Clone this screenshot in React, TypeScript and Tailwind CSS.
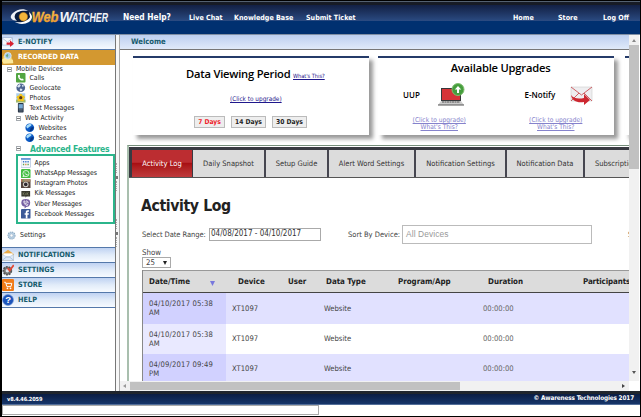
import React from "react";

const tahoma = "font-['DejaVu_Sans_Condensed','DejaVu_Sans',sans-serif]";
const trebuchet = "font-['Open_Sans','Noto_Sans',sans-serif]";

function Logo() {
  return (
    <svg className="block h-[22px] w-[104px] overflow-visible" viewBox="0 0 104 22" role="img" aria-label="WebWatcher">
      <defs>
        <linearGradient id="gold" x1="0" y1="0" x2="0" y2="1">
          <stop offset="0" stopColor="#ffd25a" />
          <stop offset="1" stopColor="#ee9120" />
        </linearGradient>
      </defs>
      <path d="M1 12C4 6 10 4 15 5C19 6 22 9 24 12C20 17 15 19 11 18C6 17 3 15 1 12Z" fill="#071b3d" />
      <path d="M3 15C0 13 0 11 3 8C7 4 14 3 18 6C11 5 6 7 5 10C4 12 5 14 7 16Z" fill="#eef2f8" />
      <path d="M19 7C23 10 23 14 19 17C14 20 8 19 5 17C12 18 18 16 20 12Z" fill="#fff" />
      <circle cx="13.4" cy="11.7" r="4.2" fill="#f3b63a" stroke="#c57c14" strokeWidth=".5" />
      <text x="21.5" y="16.5" fontFamily="Liberation Sans" fontSize="15.5" fontWeight="700" fontStyle="italic" fill="url(#gold)" stroke="#f3a935" strokeWidth=".3" textLength="27" lengthAdjust="spacingAndGlyphs">Web</text>
      <text x="49.5" y="16.5" fontFamily="Liberation Sans" fontSize="15" fontWeight="700" fontStyle="italic" fill="#f1f4f8" textLength="13.5" lengthAdjust="spacingAndGlyphs">W</text>
      <text x="62" y="16.5" fontFamily="Liberation Sans" fontSize="13" fontWeight="700" fontStyle="italic" fill="#f1f4f8" textLength="36" lengthAdjust="spacingAndGlyphs">ATCHER</text>
    </svg>
  );
}

function Icon({ name, size = "size-[10px]" }: { name: string; size?: string }) {
  const art: Record<string, React.ReactNode> = {
    call: <><rect width="10" height="10" rx="1" fill="#52a541" /><path d="M2.2 2C1.6 5.5 4.5 8.5 8 7.8L7.8 6.2L6.2 5.8L5.6 6.4L3.7 4.4L4.3 3.8L3.8 1.9Z" fill="#fff" /></>,
    geo: <><circle cx="5" cy="5" r="4.6" fill="#4d6491" /><path d="M1 3.5L4 1L5 3L3 5ZM6 1.5L8.5 3L7 4.6ZM5 5.5L7 7L5 9L3.8 7Z" fill="#dce6f2" /></>,
    photo: <><rect x=".3" y=".3" width="9.4" height="9.4" fill="#a9cdec" /><path d="M0 7H10V10H0Z" fill="#a2b86b" /><g fill="#f5c51d"><circle cx="5" cy="2.5" r="1.8" /><circle cx="7.4" cy="4.4" r="1.8" /><circle cx="6.6" cy="7" r="1.8" /><circle cx="3.4" cy="7" r="1.8" /><circle cx="2.6" cy="4.4" r="1.8" /></g><circle cx="5" cy="4.9" r="1.7" fill="#5b3a16" /></>,
    phone: <><rect x="2" y="0" width="6" height="10" rx=".8" fill="#263344" /><rect x="2.8" y="1.2" width="4.4" height="4.6" fill="#75a9d6" /><path d="M3 7H7M3 8.4H7" stroke="#7f93a8" strokeWidth=".6" /></>,
    web: <><circle cx="5" cy="5" r="4.6" fill="#0b59c4" /><path d="M1.5 3.2C3 1 6 .6 7 1.6C7 3.6 4.2 3.5 3 5.7C2 5.4 1 4.6 1.5 3.2Z" fill="#a5dcfa" /><path d="M6 5L9 4C9 7 7.2 8.8 5 9Z" fill="#063483" /></>,
    apps: <><rect width="10" height="10" fill="#f5f8fd" stroke="#9eb5d5" strokeWidth=".6" /><path d="M0 0H10V2H0Z" fill="#6b98d6" /><path d="M2 4H3.4M4.4 4H5.8M6.8 4H8.2" stroke="#3975c8" strokeWidth="1.5" /><path d="M2 6.8H3.4M6.8 6.8H8.2" stroke="#5da552" strokeWidth="1.5" /><path d="M4.4 6.8H5.8" stroke="#d98841" strokeWidth="1.5" /></>,
    whatsapp: <><rect width="10" height="10" rx="1.2" fill="#44bd42" /><circle cx="5.2" cy="4.8" r="3.2" fill="none" stroke="#fff" strokeWidth=".8" /><path d="M1.6 8.5L2.2 6.3L4 7.9ZM3.7 3.3C3.8 5.2 5.2 6.4 6.8 6.2L6.7 5.3L5.9 5L5.4 5.4L4.4 4.5L4.6 3.5Z" fill="#fff" /></>,
    instagram: <><rect width="10" height="10" rx="1" fill="#54443d" /><path d="M0 3H10V1Q10 0 9 0H1Q0 0 0 1Z" fill="#a98c6c" /><path d="M1.2 0V3" stroke="#d34d42" /><path d="M2.2 0V3" stroke="#64a365" /><circle cx="5" cy="5.7" r="2.9" fill="#ddd9d0" /><circle cx="5" cy="5.7" r="1.9" fill="#302b30" /></>,
    kik: <><path d="M.4 2H9.6V7.8H5.8L4.8 9.2V7.8H.4Z" fill="#37382d" /><path d="M2.2 3.4V6.4M3.8 3.7L2.4 5L3.9 6.4M5 4.3V6.4M6.3 3.4V6.4M8 3.7L6.5 5L8.1 6.4" fill="none" stroke="#9fa67e" strokeWidth=".5" /></>,
    viber: <><path d="M2 .5Q5-.4 8 .5Q9.5 1 9.7 4Q9.6 7.4 7.8 8L5.6 8.4L3.8 10V8Q.5 7.8.3 4Q.5 1 2 .5Z" fill="#7660a3" /><path d="M3.1 2C2.4 3.8 4.4 6.9 6.6 7L7.3 6L6 5L5.3 5.4L4.1 3.8L4.5 3.2L3.8 2ZM5.3 1.8Q7.7 2.2 7.7 4.4M5.5 3Q6.5 3.3 6.5 4.2" fill="none" stroke="#fff" strokeWidth=".8" /></>,
    facebook: <><rect width="10" height="10" rx=".5" fill="#3b5998" /><path d="M5 10V6H3.8V4.5H5V3.4C5 1.9 5.9 1.3 7.1 1.3H8.4V2.9H7.5C6.9 2.9 6.8 3.2 6.8 3.7V4.5H8.3L8.1 6H6.8V10Z" fill="#fff" /></>,
    gear: <><circle cx="5" cy="5" r="3.9" fill="#bdd2e4" stroke="#8ba9c1" strokeWidth="1.2" strokeDasharray="1.5 .8" /><circle cx="5" cy="5" r="3" fill="#b6cde1" /><circle cx="5" cy="5" r="1.6" fill="#fff" stroke="#91aac0" strokeWidth=".5" /></>,
    enotify: <><rect x=".2" y="1.6" width="9.5" height="6.7" fill="#f7f9fd" stroke="#8ba1c8" strokeWidth=".5" /><path d="M.3 2L5 5.6L9.5 2" fill="none" stroke="#9eb0cf" strokeWidth=".6" /><path d="M4.2 6H7.3V4L11 7.1L7.3 10V8H4.2Z" fill="#d9202f" /></>,
    recorded: <><path d="M0 9L1.2 3.2L4.2 3.6L5 4.8L9 4.5L10.4 10L1.5 10.6Z" fill="#f4d169" stroke="#c79424" strokeWidth=".4" /><path d="M0 7L2.5 5.2L10 7L10.3 10.4L1.3 10.8Z" fill="#fce99c" /><circle cx="5.4" cy="3.5" r="3.1" fill="#a4cce9" stroke="#e4eff5" strokeWidth=".7" /><path d="M3.5 3.5L5 1.5L5.8 3L4.9 5Z" fill="#68a675" /></>,
    mail: <><path d="M.2 4.5L5.5.7L10.8 4.5V10.5H.2Z" fill="#e9aa45" /><path d="M1.2 4H9.8V8H1.2Z" fill="#fff" /><path d="M.2 5L5.5 7.8L10.8 5V10.5H.2Z" fill="#dce9f8" stroke="#9cb4d2" strokeWidth=".4" /><path d="M.3 10.3L4 7.4Q5.5 6.5 7 7.4L10.6 10.3" fill="none" stroke="#8ba5c6" strokeWidth=".5" /></>,
    tools: <><circle cx="4.9" cy="6.2" r="3.7" fill="#777" stroke="#555" strokeWidth="1.5" strokeDasharray="1.7 .9" /><circle cx="4.9" cy="6.2" r="1.6" fill="#dbe5ef" /><path d="M5.2 3.8L7 6L10.8.9" fill="none" stroke="#e24733" strokeWidth="1.6" /></>,
    cart: <><rect width="11" height="11" rx="1.2" fill="#f17b18" /><path d="M2 3H3.3L4.5 7H8.2L9 4H3.8" fill="none" stroke="#fff" strokeWidth=".9" /><circle cx="5" cy="8.5" r=".8" fill="#fff" /><circle cx="7.8" cy="8.5" r=".8" fill="#fff" /></>,
    help: <><circle cx="5.5" cy="5.5" r="5" fill="#1d54bb" stroke="#7096d7" strokeWidth=".6" /><text x="2.9" y="8.7" fontSize="8.8" fontFamily="Liberation Sans" fontWeight="700" fill="#fff">?</text></>,
  };
  const big = ["enotify", "recorded", "mail", "tools", "cart", "help"].includes(name);
  return <svg className={`${size} block shrink-0`} viewBox={big ? "0 0 11 11" : "0 0 10 10"}>{art[name]}</svg>;
}

function Minus() {
  return <span className="flex size-[5px] shrink-0 items-center justify-center border border-[#a5aaaf] bg-white"><span className="h-px w-[3px] bg-[#777]" /></span>;
}

function SideHead({ icon, label }: { icon: string; label: string }) {
  return (
    <div className="flex h-[15px] items-center gap-[4px] border-b border-[#5478aa] bg-linear-to-b from-[#bfd2f2] via-[#e2ecf9] to-[#f6faff] text-[7.3px] font-bold text-[#165b6c]">
      <Icon name={icon} size="size-[12px]" /><span>{label}</span>
    </div>
  );
}

function Row({ icon, label, indent = "pl-[14px]" }: { icon: string; label: string; indent?: string }) {
  return <div className={`flex h-[10px] shrink-0 items-center gap-[4px] ${indent}`}><Icon name={icon} size="size-[9.5px]" /><span>{label}</span></div>;
}

function Sidebar() {
  return (
    <aside className="flex w-[114px] shrink-0 flex-col border-r border-[#777] bg-white text-[6.9px] text-[#222]">
      <SideHead icon="enotify" label="E-NOTIFY" />
      <div className="flex h-[15px] items-center gap-[4px] bg-[#d39830] text-[7.2px] font-bold text-white"><Icon name="recorded" size="size-[12px]" />RECORDED DATA</div>
      <div className="flex h-[182px] flex-col">
        <div className="flex h-[8px] shrink-0 items-center gap-[4px] pl-[5px]"><Minus />Mobile Devices</div>
        <Row icon="call" label="Calls" />
        <Row icon="geo" label="Geolocate" />
        <Row icon="photo" label="Photos" />
        <Row icon="phone" label="Text Messages" />
        <div className="flex h-[10px] shrink-0 items-center gap-[4px] pl-[14px]"><Minus />Web Activity</div>
        <Row icon="web" label="Websites" indent="pl-[23px]" />
        <Row icon="web" label="Searches" indent="pl-[23px]" />
        <div className="flex h-[11px] shrink-0 items-center gap-[9px] pl-[14px]"><Minus /><span className="text-[8.6px] leading-[10px] font-bold tracking-[-0.25px] whitespace-nowrap text-[#2bb58b]">Advanced Features</span></div>
        <div className="ml-[14px] flex h-[70px] shrink-0 flex-col border-2 border-[#2bb58b] pt-[2px]">
          {[["apps", "Apps"], ["whatsapp", "WhatsApp Messages"], ["instagram", "Instagram Photos"], ["kik", "Kik Messages"], ["viber", "Viber Messages"], ["facebook", "Facebook Messages"]].map(([i, l]) => (
            <div key={l} className="flex h-[10.2px] shrink-0 items-center gap-[4px] pl-[3px] tracking-[-0.1px]"><Icon name={i} size="size-[9.5px]" />{l}</div>
          ))}
        </div>
        <div className="mt-[6px] flex h-[10px] items-center gap-[4px] pl-[5px]"><Icon name="gear" size="size-[9px]" />Settings</div>
      </div>
      <div className="border-t border-[#5478aa]">
        <SideHead icon="mail" label="NOTIFICATIONS" />
        <SideHead icon="tools" label="SETTINGS" />
        <SideHead icon="cart" label="STORE" />
        <SideHead icon="help" label="HELP" />
      </div>
    </aside>
  );
}

const cardStyle = "h-[79px] shrink-0 border-t-2 border-[#253b69] bg-white shadow-[4px_4px_4px_#999]";

function Upgrade({ label, offset, labelWidth, children }: { label: string; offset: string; labelWidth: string; children: React.ReactNode }) {
  return (
    <div className="flex w-[117px] flex-col">
      <div className={`flex h-[24px] items-center ${offset}`}><span className={`${labelWidth} text-[8px] font-semibold text-black`}>{label}</span>{children}</div>
      <div className={`${tahoma} mt-[10px] text-center text-[6.6px] leading-[7px] text-[#8582cc] underline`}>(Click to upgrade)<br />What's This?</div>
    </div>
  );
}

function Cards() {
  return (
    <div className="flex h-[95px] shrink-0 gap-[9px] overflow-hidden pl-[13px] pt-[6px]">
      <section className={`${cardStyle} w-[236px]`}>
        <div className="flex h-[36px] items-start pl-[53px] pt-[8px]">
          <h2 className={`${trebuchet} w-[107px] text-[11.2px] leading-[16px] font-semibold tracking-[-0.22px] whitespace-nowrap text-black`}>Data Viewing Period</h2>
          <a className="mt-[6px] text-[5.7px] leading-[8px] tracking-[-0.05px] whitespace-nowrap text-[#1f188c] underline">What's This?</a>
        </div>
        <div className="h-[22px] pl-[97px] text-[6.4px] leading-[10px] text-[#1f188c] underline">(Click to upgrade)</div>
        <div className="flex gap-[6px] pl-[61px] text-[6.7px] leading-[10px] font-bold text-[#222]">
          <button className="h-[12px] w-[31px] border border-[#bbb] bg-[#eee] text-[#ef2029]">7 Days</button>
          <button className="h-[12px] w-[35px] border border-[#bbb] bg-[#eee]">14 Days</button>
          <button className="h-[12px] w-[35px] border border-[#bbb] bg-[#eee]">30 Days</button>
        </div>
      </section>
      <section className={`${cardStyle} ${trebuchet} w-[236px]`}>
        <h2 className="h-[25px] pl-[9px] text-center text-[11.2px] leading-[20px] font-semibold tracking-[-0.22px] text-black">Available Upgrades</h2>
        <div className="flex pl-[3px]">
          <Upgrade label="UUP" offset="pl-[22px]" labelWidth="w-[34px]">
            <svg className="h-[24px] w-[28px]" viewBox="0 0 28 24">
              <path d="M4 5H24V18H4Z" fill="#36383b" /><path d="M5 6H23V17H5Z" fill="#d63438" />
              <path d="M4 18H24L27 22H1Z" fill="#ccc" /><path d="M5 19H23" stroke="#555" strokeWidth="1" strokeDasharray="2 .5" /><path d="M1 22H27" stroke="#555" />
              <circle cx="21" cy="6.5" r="6" fill="#459e3d" stroke="#80bd6f" /><path d="M21 3L17.8 6.4H20V10H22V6.4H24.2Z" fill="#fff" />
            </svg>
          </Upgrade>
          <Upgrade label="E-Notify" offset="pl-[27px]" labelWidth="w-[45px]">
            <svg className="h-[22px] w-[23px]" viewBox="0 0 23 22">
              <path d="M1 3H22V17H1Z" fill="#eeeef0" stroke="#ccc" strokeWidth=".6" /><path d="M1 3L11.5 11L22 3M1 17L9 9M14 9L22 17" fill="none" stroke="#c63d43" strokeWidth=".8" />
              <path d="M1 11C4 15 9 15 14 14V10L20 16L14 21V18C7 19 2 17 1 11Z" fill="#cd2730" />
            </svg>
          </Upgrade>
        </div>
      </section>
      <section className={`${cardStyle} ml-[2px] w-[236px]`} />
    </div>
  );
}

function Tabs() {
  const tabs: [string, string][] = [["Daily Snapshot", "w-[73px]"], ["Setup Guide", "w-[63px]"], ["Alert Word Settings", "w-[87px]"], ["Notification Settings", "w-[91px]"], ["Notification Data", "w-[78px]"]];
  return (
    <nav className="flex h-[31px] shrink-0 border-t-[3px] border-b border-b-[#555] border-t-[#393a42] bg-[#393a42] pl-[3px] text-[7.5px] text-[#333]">
      <div className="flex w-[61px] shrink-0 items-center justify-center border-r border-[#393a42] bg-linear-to-b from-[#bc2d31] from-45% via-[#a80f13] via-50% to-[#bf3a3c] text-white">Activity Log</div>
      {tabs.map(([label, w]) => <div key={label} className={`${w} flex shrink-0 items-center justify-center border-r-2 border-[#464650] bg-[#dcdcdc] whitespace-nowrap`}>{label}</div>)}
      <div className="flex grow items-center overflow-hidden bg-[#dcdcdc] pl-[10px] whitespace-nowrap">Subscription</div>
    </nav>
  );
}

function LogTable() {
  const cols = "grid grid-cols-[83px_50px_42px_80px_85px_105px_70px]";
  return (
    <div className="w-[510px] border-l border-[#888] text-[7.6px] text-[#444]">
      <div className="flex h-[23px] items-center border-b border-t border-b-[#444] border-t-[#999] bg-[#dcdcdc] text-[7.9px] font-bold text-[#222]">
        <span className="w-[67px] pl-[6px]">Date/Time</span><span className="mt-[4px] w-[28px]"><svg className="h-[5px] w-[5px]" viewBox="0 0 5 5"><path d="M0 0H5L2.5 5Z" fill="#7878dd" /></svg></span>
        <span className="w-[50px]">Device</span><span className="w-[38px]">User</span><span className="w-[72px]">Data Type</span><span className="w-[90px]">Program/App</span><span className="w-[95px]">Duration</span><span className="tracking-[-0.1px]">Participants</span>
      </div>
      {["04/10/2017 05:38 AM", "04/10/2017 05:38 AM", "04/09/2017 09:49 PM"].map((date, i) => (
        <div key={i} className={`${cols} h-[30.3px] items-center ${i % 2 ? "bg-white" : "bg-[#e1e1ff]"}`}>
          <div className={`flex h-full items-center pl-[6px] leading-[9px] ${i % 2 ? "bg-[#e9e9ff]" : "bg-[#d1d1ff]"}`}><span className="w-[70px] tracking-[0.18px]">{date}</span></div>
          <span className="pl-[6px]">XT1097</span><span /><span className="pl-[6px]">Website</span><span /><span className="text-[#666]">00:00:00</span><span />
        </div>
      ))}
    </div>
  );
}

function Main() {
  return (
    <main className="flex w-[520px] shrink-0 flex-col border-l border-[#aaa] bg-white">
      <div className="flex h-[346px] overflow-hidden">
        <div className="flex w-[509px] shrink-0 flex-col overflow-hidden">
          <div className="flex h-[15px] shrink-0 items-center border-b border-[#777] bg-linear-to-b from-[#bdcff0] to-[#e0eaf9] pl-[11px] text-[7.6px] font-bold text-[#165b6c]">Welcome</div>
          <Cards />
          <div className="ml-[7px] flex h-[236px] shrink-0 flex-col border-l-2 border-t border-l-[#a9bfae] border-t-[#768e7b] pt-[1px]">
            <Tabs />
            <h1 className="ml-[12px] mt-[14px] h-[28px] text-[15.7px] leading-[27px] font-bold tracking-[-0.4px] text-[#222]">Activity Log</h1>
            <div className="mt-[5px] flex h-[20px] shrink-0 items-center pl-[13px] text-[7.5px] text-[#444]">
              <span className="w-[67px] shrink-0 tracking-[-0.06px] whitespace-nowrap">Select Date Range:</span>
              <div className="mr-[27px] flex h-[13px] w-[112px] shrink-0 items-center border border-[#aaa] pl-px text-[8px] text-[#333]">04/08/2017 - 04/10/2017</div>
              <span className="w-[54px] shrink-0 whitespace-nowrap">Sort By Device:</span>
              <div className="flex h-[19px] w-[190px] shrink-0 items-center border border-[#bbb] pl-[3px] font-['Liberation_Sans',sans-serif] text-[8.4px] tracking-[0.1px] text-[#999]">All Devices</div>
              <span className="ml-[36px] shrink-0">Sort</span>
            </div>
            <div className="h-[26px] shrink-0 pl-[13px] text-[7.8px] leading-[9px] text-[#444]">
              <div className="pt-[4px]">Show</div>
              <div className="flex h-[11px] w-[29px] items-center gap-[8px] border border-[#aaa] pl-[3px]">25 <svg className="size-[4px]" viewBox="0 0 4 4"><path d="M0 0H4L2 4Z" fill="#222" /></svg></div>
            </div>
            <div className="ml-[13px] overflow-hidden"><LogTable /></div>
          </div>
        </div>
        <div className="flex w-[10px] flex-col bg-[#f1f1f1]">
          <div className="flex h-[10px] items-center justify-center"><svg className="h-[3px] w-[4px]" viewBox="0 0 4 3"><path d="M0 3L2 0L4 3Z" fill="#888" /></svg></div>
          <div className="h-[124px] bg-[#c1c1c1]" />
          <div className="mt-auto flex h-[10px] items-start justify-center"><svg className="h-[3px] w-[4px]" viewBox="0 0 4 3"><path d="M0 0L2 3L4 0Z" fill="#555" /></svg></div>
        </div>
      </div>
      <div className="flex h-[10px] w-[509px] items-center bg-[#f1f1f1]">
        <div className="w-[10px] pl-[3px]"><svg className="h-[4px] w-[3px]" viewBox="0 0 3 4"><path d="M3 0L0 2L3 4Z" fill="#999" /></svg></div>
        <div className="h-[8px] w-[330px] bg-[#c1c1c1]" />
        <svg className="ml-auto mr-[4px] h-[4px] w-[3px]" viewBox="0 0 3 4"><path d="M0 0L3 2L0 4Z" fill="#444" /></svg>
      </div>
    </main>
  );
}

export default function App() {
  return (
    <div className={`${tahoma} flex h-[417px] w-[641px] flex-col overflow-hidden border border-l-2 border-black bg-white`}>
      <header className="flex h-[34px] shrink-0 flex-col border-b border-[#8190a5] bg-[#003070]">
        <div className="h-[4px] shrink-0 border-t border-[#536070] bg-[#171b25]" />
        <div className="flex h-[16px] shrink-0 items-start bg-linear-to-b from-[#122044] to-[#2b4b82] text-[7.1px] leading-[11px] font-bold whitespace-nowrap text-white">
          <div className="w-[121px] shrink-0 pl-[8px]"><Logo /></div>
          <span className="w-[66px] pt-[7px] text-[8.3px]">Need Help?</span>
          <span className="w-[45px] pt-[7px]">Live Chat</span><span className="w-[72px] pt-[7px]">Knowledge Base</span><span className="w-[207px] pt-[7px]">Submit Ticket</span><span className="w-[45px] pt-[7px]">Home</span><span className="w-[45px] pt-[7px]">Store</span><span className="pt-[7px]">Log Off</span>
        </div>
      </header>
      <div className="flex h-[356px] shrink-0">
        <Sidebar />
        <div className="flex w-[3px] shrink-0 flex-col justify-start gap-[28px] bg-[#f7f7f7] pt-[128px]">
          {[0, 1].map((i) => <div key={i} className="flex h-[28px] flex-col justify-between"><span className="h-[10px] border-l border-dotted border-[#aaa]" /><span className="h-[3px] w-[2px] bg-[#777]" /><span className="h-[10px] border-l border-dotted border-[#aaa]" /></div>)}
        </div>
        <Main />
      </div>
      <footer className="flex h-[14px] shrink-0 items-center justify-between border-b border-t-[3px] border-b-[#536e99] border-t-[#20252d] bg-linear-to-b from-[#0b1d43] to-[#16356a] pr-[6px] pl-[5px] text-[6.4px] font-bold tracking-[-0.15px] text-white"><span className="text-[5.6px]">v8.4.46.2059</span><span>© Awareness Technologies 2017</span></footer>
      <div className="h-[10px] w-[317px] shrink-0 border border-[#aaa] bg-white" />
    </div>
  );
}
